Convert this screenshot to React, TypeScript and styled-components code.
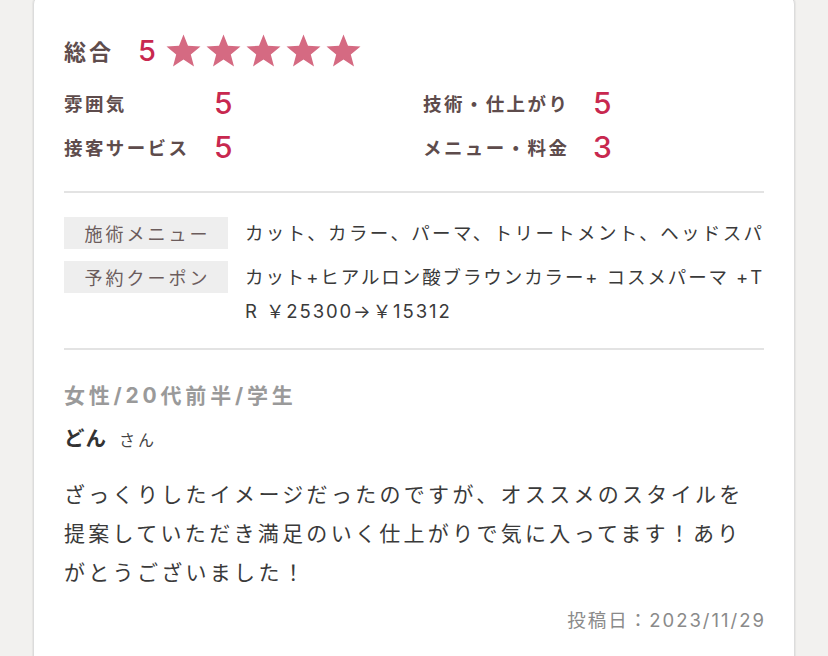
import React from "react";
import styled, { createGlobalStyle } from "styled-components";

const Global = createGlobalStyle`
  html, body { margin: 0; padding: 0; background: #f2f1ef; }
  body { font-family: Inter, "Noto Sans CJK JP", sans-serif; overflow: hidden; }
`;

const Page = styled.div`
  width: 828px;
  height: 656px;
  overflow: hidden;
`;

const Card = styled.article`
  width: 700px;
  margin: -4px 0 0 33px;
  padding: 0 30px 60px;
  background: #ffffff;
  border: 1px solid #dcdcdc;
  border-radius: 8px;
  box-shadow: 1px 0 1px rgba(0, 0, 0, 0.05), -1px 0 1px rgba(0, 0, 0, 0.05);
`;

const Section = styled.section<{ $pt: number; $pb: number; $line?: boolean }>`
  padding: ${(p) => p.$pt}px 0 ${(p) => p.$pb}px;
  border-bottom: ${(p) => (p.$line ? "2px solid #e3e3e3" : "none")};
`;

const TotalRow = styled.div`
  display: flex;
  align-items: center;
  height: 36px;
`;

const TotalLabel = styled.span`
  font-size: 22px;
  font-weight: 700;
  letter-spacing: 3px;
  color: #5e4c4c;
  width: 74px;
`;

const Score = styled.span<{ $size: number }>`
  font-family: Inter, "Liberation Sans", sans-serif;
  font-size: ${(p) => p.$size}px;
  font-weight: 500;
  color: #c8284f;
  line-height: 1;
`;

const Stars = styled.div`
  display: flex;
  gap: 5px;
  margin-left: 10px;
`;

const SubGrid = styled.div`
  display: grid;
  grid-template-columns: 359px 1fr;
  row-gap: 12px;
  margin-top: 19px;
`;

const SubItem = styled.div`
  display: flex;
  align-items: center;
  height: 32px;
`;

const SubLabel = styled.span<{ $w: number }>`
  width: ${(p) => p.$w}px;
  font-size: 18.5px;
  font-weight: 700;
  letter-spacing: 2.4px;
  color: #5e4c4c;
`;

const InfoRow = styled.div`
  display: flex;
  align-items: flex-start;
  & + & { margin-top: 10px; }
`;

const InfoLabel = styled.div`
  flex: 0 0 164px;
  height: 32px;
  margin-top: 1px;
  padding-left: 3px;
  box-sizing: border-box;
  background: #eeeeee;
  display: flex;
  align-items: center;
  justify-content: center;
  font-size: 18px;
  letter-spacing: 3px;
  color: #6b5c5c;
`;

const InfoValue = styled.div<{ $ls: number }>`
  margin-left: 17px;
  flex: 1;
  font-size: 18.5px;
  line-height: 34px;
  letter-spacing: ${(p) => p.$ls}px;
  color: #3a3a3a;
  white-space: nowrap;
`;

const Profile = styled.div`
  font-size: 21px;
  line-height: 30px;
  font-weight: 700;
  color: #9a9a9a;
  letter-spacing: 3.8px;
`;

const Name = styled.div`
  margin-top: 14px;
  line-height: 28px;
  color: #333333;
  font-size: 20.5px;
  font-weight: 700;
  letter-spacing: 1px;
`;

const Honor = styled.span`
  font-size: 16px;
  font-weight: 400;
  margin-left: 12px;
  letter-spacing: 3px;
  color: #444444;
`;

const Body = styled.p`
  margin: 21px 0 0;
  font-size: 21px;
  line-height: 39px;
  letter-spacing: 3.3px;
  color: #3a3a3a;
`;

const PostDate = styled.div`
  margin-top: 15px;
  text-align: right;
  font-size: 18.5px;
  line-height: 26px;
  color: #8a8a8a;
  letter-spacing: 2px;
  margin-right: -2px;
`;

const Star = () => (
  <svg width="35" height="33" viewBox="0 0 35 33" aria-hidden>
    <polygon
      points="17.5,0.5 22,11.8 34.5,12.5 24.8,20.4 28,32.5 17.5,25.6 7,32.5 10.2,20.4 0.5,12.5 13,11.8"
      fill="#d56a82"
    />
  </svg>
);

const subs = [
  { label: "雰囲気", w: 150, score: 5 },
  { label: "技術・仕上がり", w: 170, score: 5 },
  { label: "接客サービス", w: 150, score: 5 },
  { label: "メニュー・料金", w: 170, score: 3 },
];

export default function App() {
  return (
    <Page>
      <Global />
      <Card>
        <Section $pt={35} $pb={28} $line>
          <TotalRow>
            <TotalLabel>総合</TotalLabel>
            <Score $size={29}>5</Score>
            <Stars>
              {[0, 1, 2, 3, 4].map((i) => (
                <Star key={i} />
              ))}
            </Stars>
          </TotalRow>
          <SubGrid>
            {subs.map((s) => (
              <SubItem key={s.label}>
                <SubLabel $w={s.w}>{s.label}</SubLabel>
                <Score $size={30}>{s.score}</Score>
              </SubItem>
            ))}
          </SubGrid>
        </Section>
        <Section $pt={23} $pb={20} $line>
          <InfoRow>
            <InfoLabel>施術メニュー</InfoLabel>
            <InfoValue $ls={2.35}>カット、カラー、パーマ、トリートメント、ヘッドスパ</InfoValue>
          </InfoRow>
          <InfoRow>
            <InfoLabel>予約クーポン</InfoLabel>
            <InfoValue $ls={1.9}>
              カット+ヒアルロン酸ブラウンカラー+ コスメパーマ +T
              <br />R ￥25300→￥15312
            </InfoValue>
          </InfoRow>
        </Section>
        <Section $pt={31} $pb={0}>
          <Profile>女性/20代前半/学生</Profile>
          <Name>
            どん<Honor>さん</Honor>
          </Name>
          <Body>
            ざっくりしたイメージだったのですが、オススメのスタイルを提案していただき満足のいく仕上がりで気に入ってます！ありがとうございました！
          </Body>
          <PostDate>投稿日：2023/11/29</PostDate>
        </Section>
      </Card>
    </Page>
  );
}
